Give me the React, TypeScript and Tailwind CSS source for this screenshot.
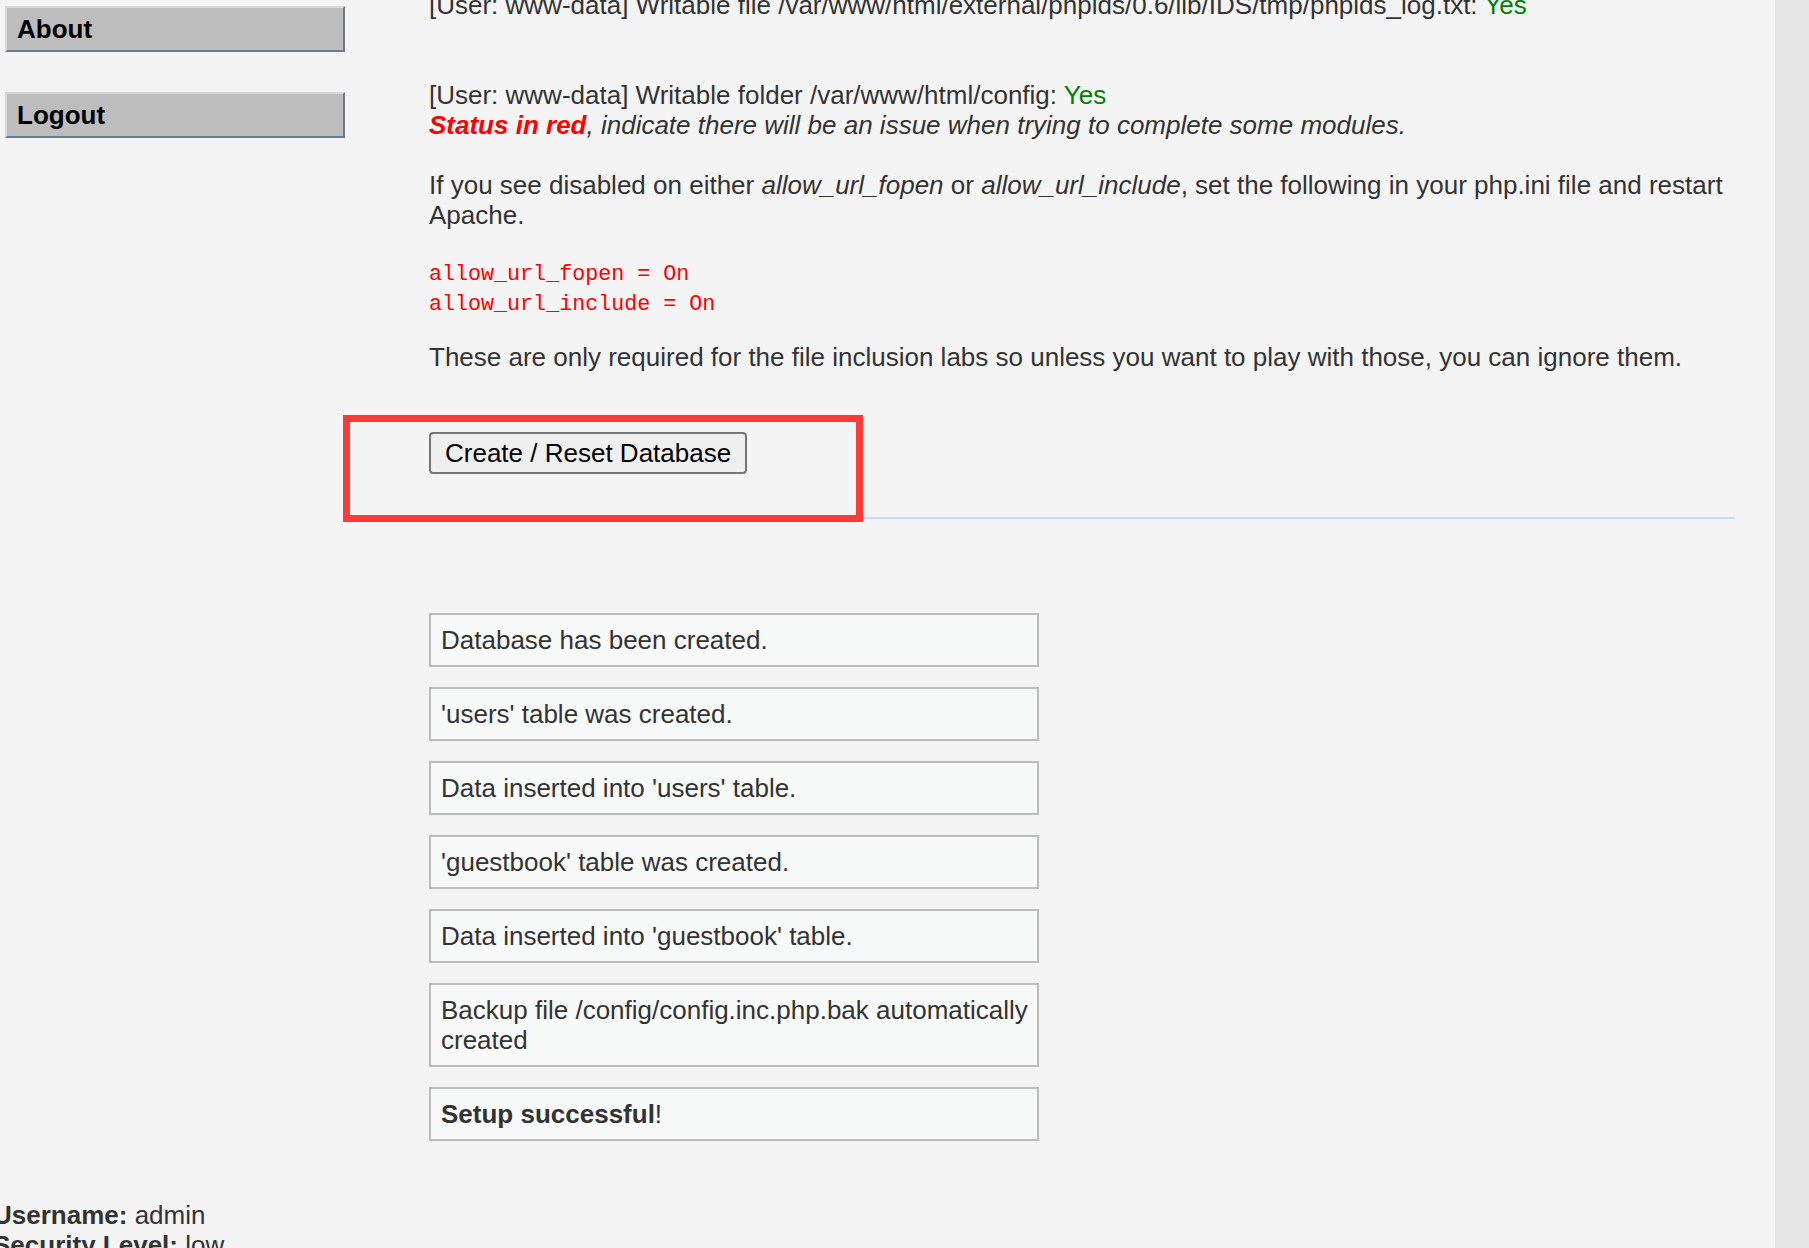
import type { FC } from "react";

const menu = ["About", "Logout"];

const messages: { text: string; bold?: string }[] = [
  { text: "Database has been created." },
  { text: "'users' table was created." },
  { text: "Data inserted into 'users' table." },
  { text: "'guestbook' table was created." },
  { text: "Data inserted into 'guestbook' table." },
  { text: "Backup file /config/config.inc.php.bak automatically created" },
  { bold: "Setup successful", text: "!" },
];

const Sidebar: FC = () => (
  <aside className="w-[429px] shrink-0 pl-[5px] pt-[6px]">
    <ul className="w-[340px] flex flex-col gap-[40px]">
      {menu.map((item) => (
        <li
          key={item}
          className="h-[46px] flex items-center pl-[10px] bg-[#bdbdbd] border-2 border-t-[#d8d8d8] border-l-[#d8d8d8] border-r-[#6c7a8e] border-b-[#6c7a8e] font-bold text-black"
        >
          {item}
        </li>
      ))}
    </ul>
  </aside>
);

const App: FC = () => {
  return (
    <div className="h-[1248px] overflow-hidden bg-[#e7e7e7] font-['Liberation_Sans',Arial,sans-serif] text-[26px] leading-[30px] text-[#333]">
      <div className="w-[1775px] h-full bg-[#f4f4f4] flex flex-col">
        <div className="flex">
          <Sidebar />

          <main className="w-[1306px] -mt-[10px]">
            <div>
              [User: www-data] Writable file /var/www/html/external/phpids/0.6/lib/IDS/tmp/phpids_log.txt:{" "}
              <span className="text-[#008000]">Yes</span>
              <br />
              <br />
              <br />
              [User: www-data] Writable folder /var/www/html/config:{" "}
              <span className="text-[#008000]">Yes</span>
              <br />
              <i>
                <span className="font-bold text-[#ff0000]">Status in red</span>, indicate there will be an issue when
                trying to complete some modules.
              </i>
              <br />
              <br />
              If you see disabled on either <i>allow_url_fopen</i> or <i>allow_url_include</i>, set the following in
              your php.ini file and restart Apache.
            </div>

            <pre className="mt-[30px] mb-[22px] font-['Liberation_Mono',monospace] text-[21.7px] leading-[30px] text-[#ff0000]">
              {"allow_url_fopen = On\nallow_url_include = On"}
            </pre>

            <p>
              These are only required for the file inclusion labs so unless you want to play with those, you can
              ignore them.
            </p>

            <div className="relative mt-[60px] w-fit">
              <button className="h-[42px] px-[14px] border-2 border-[#767676] rounded-[4px] bg-[#efefef] text-black leading-[30px]">
                Create / Reset Database
              </button>
              <div className="absolute -left-[86px] -top-[17px] w-[520px] h-[107px] border-[7px] border-[#fb3a3a]" />
            </div>

            <div className="mt-[43px] h-[2px] bg-[#c6dafc]" />

            <div className="mt-[94px] flex flex-col gap-[20px]">
              {messages.map((m, index) => (
                <div
                  key={index}
                  className="w-[610px] border-2 border-[#bcbcbc] bg-[#f8f9f9] py-[10px] pl-[10px] pr-[6px]"
                >
                  {m.bold && <b>{m.bold}</b>}
                  {m.text}
                </div>
              ))}
            </div>
          </main>
        </div>

        <footer className="mt-[59px] -ml-[7px]">
          <div>
            <b>Username:</b> admin
          </div>
          <div>
            <b>Security Level:</b> low
          </div>
          <div>
            <b>Locale:</b> en
          </div>
          <div>
            <b>SQLi DB:</b> mysql
          </div>
        </footer>
      </div>
    </div>
  );
};

export default App;
